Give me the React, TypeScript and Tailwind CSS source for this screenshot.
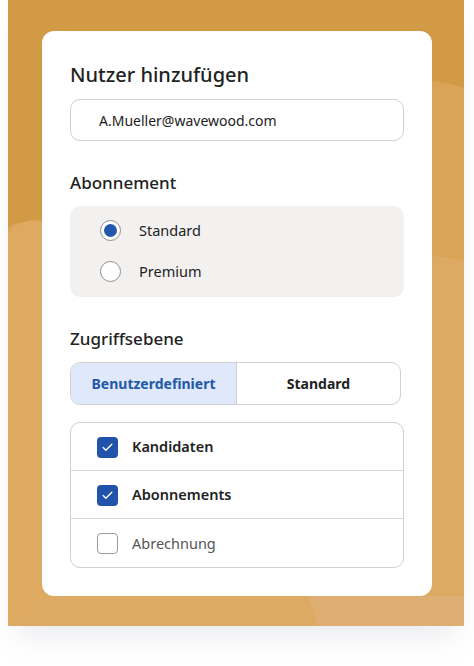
import { Check } from 'lucide-react'

function Backdrop() {
  return (
    <svg className="absolute inset-0 h-full w-full" viewBox="0 0 456 626" preserveAspectRatio="none">
      <rect width="456" height="626" fill="#ddaa63" />
      <path d="M0 0 H456 V260 C380 250 330 240 300 250 C200 205 60 200 0 232 Z" fill="#d9a358" />
      <path d="M0 0 H456 V88 C430 80 410 78 380 84 L0 84 Z" fill="#d29a44" />
      <path d="M0 0 H38 V232 C20 222 8 220 0 228 Z" fill="#d29a44" />
      <path d="M0 232 C12 220 26 218 38 222 V600 L0 626 Z" fill="#deaa62" />
      <path d="M300 596 L310 626 H456 V596 Z" fill="#dfae72" />
    </svg>
  )
}

function Radio({ checked, label }: { checked?: boolean; label: string }) {
  return (
    <div className="flex items-center gap-[18px] h-[41px]">
      <span className="flex h-[21px] w-[21px] items-center justify-center rounded-full border-[1.5px] border-[#8f8f8f] bg-white">
        {checked && <span className="h-[13px] w-[13px] rounded-full bg-[#2458ac]" />}
      </span>
      <span className="text-[14.5px] text-[#222]">{label}</span>
    </div>
  )
}

function CheckRow({ checked, label, last }: { checked?: boolean; label: string; last?: boolean }) {
  return (
    <div className={`flex h-[48px] items-center gap-[14px] pl-[26px] pt-[1px] ${last ? '' : 'border-b border-[#d6d6d6]'}`}>
      {checked ? (
        <span className="flex h-[21px] w-[21px] items-center justify-center rounded-[4px] bg-[#2053a9]">
          <Check className="h-[13px] w-[13px] text-white" strokeWidth={2.5} />
        </span>
      ) : (
        <span className="h-[21px] w-[21px] rounded-[4px] border-[1.5px] border-[#9a9a9a] bg-white" />
      )}
      <span className={`text-[14.5px] ${checked ? 'font-semibold text-[#222]' : 'text-[#555]'}`}>{label}</span>
    </div>
  )
}

export default function App() {
  return (
    <div className="h-[666px] w-[474px] bg-white" style={{ fontFamily: '"Noto Sans", "Open Sans", sans-serif' }}>
      <div className="relative ml-[8px] h-[626px] w-[456px] pt-[31px] shadow-[0_18px_30px_-10px_rgba(120,130,150,0.18)]">
        <Backdrop />
        <div className="relative ml-[34px] h-[565px] w-[390px] rounded-[12px] bg-white px-[28px] pt-[31px]">
          <h1 className="text-[20px] font-medium leading-[26px] text-[#222]">Nutzer hinzufügen</h1>
          <div className="mt-[11px] flex h-[42px] w-[334px] items-center rounded-[10px] border border-[#cfcfcf] pl-[28px] text-[14px] text-[#222]">
            A.Mueller@wavewood.com
          </div>

          <h2 className="mt-[30px] text-[17px] font-medium leading-[24px] text-[#222]">Abonnement</h2>
          <div className="mt-[11px] flex w-[334px] flex-col rounded-[10px] bg-[#f2f1f0] pl-[30px] pt-[4px] pb-[5px]">
            <Radio checked label="Standard" />
            <Radio label="Premium" />
          </div>

          <h2 className="mt-[30px] text-[17px] font-medium leading-[24px] text-[#222]">Zugriffsebene</h2>
          <div className="mt-[11px] flex h-[43px] w-[331px] overflow-hidden rounded-[10px] border border-[#d0d0d0]">
            <div className="flex w-[166px] items-center justify-center border-r border-[#d0d0d0] bg-[#dfe9fb] text-[14px] font-bold text-[#2458a8]">
              Benutzerdefiniert
            </div>
            <div className="flex flex-1 items-center justify-center text-[14px] font-bold text-[#222]">Standard</div>
          </div>

          <div className="mt-[17px] w-[334px] rounded-[10px] border border-[#d0d0d0]">
            <CheckRow checked label="Kandidaten" />
            <CheckRow checked label="Abonnements" />
            <CheckRow label="Abrechnung" last />
          </div>
        </div>
      </div>
    </div>
  )
}
